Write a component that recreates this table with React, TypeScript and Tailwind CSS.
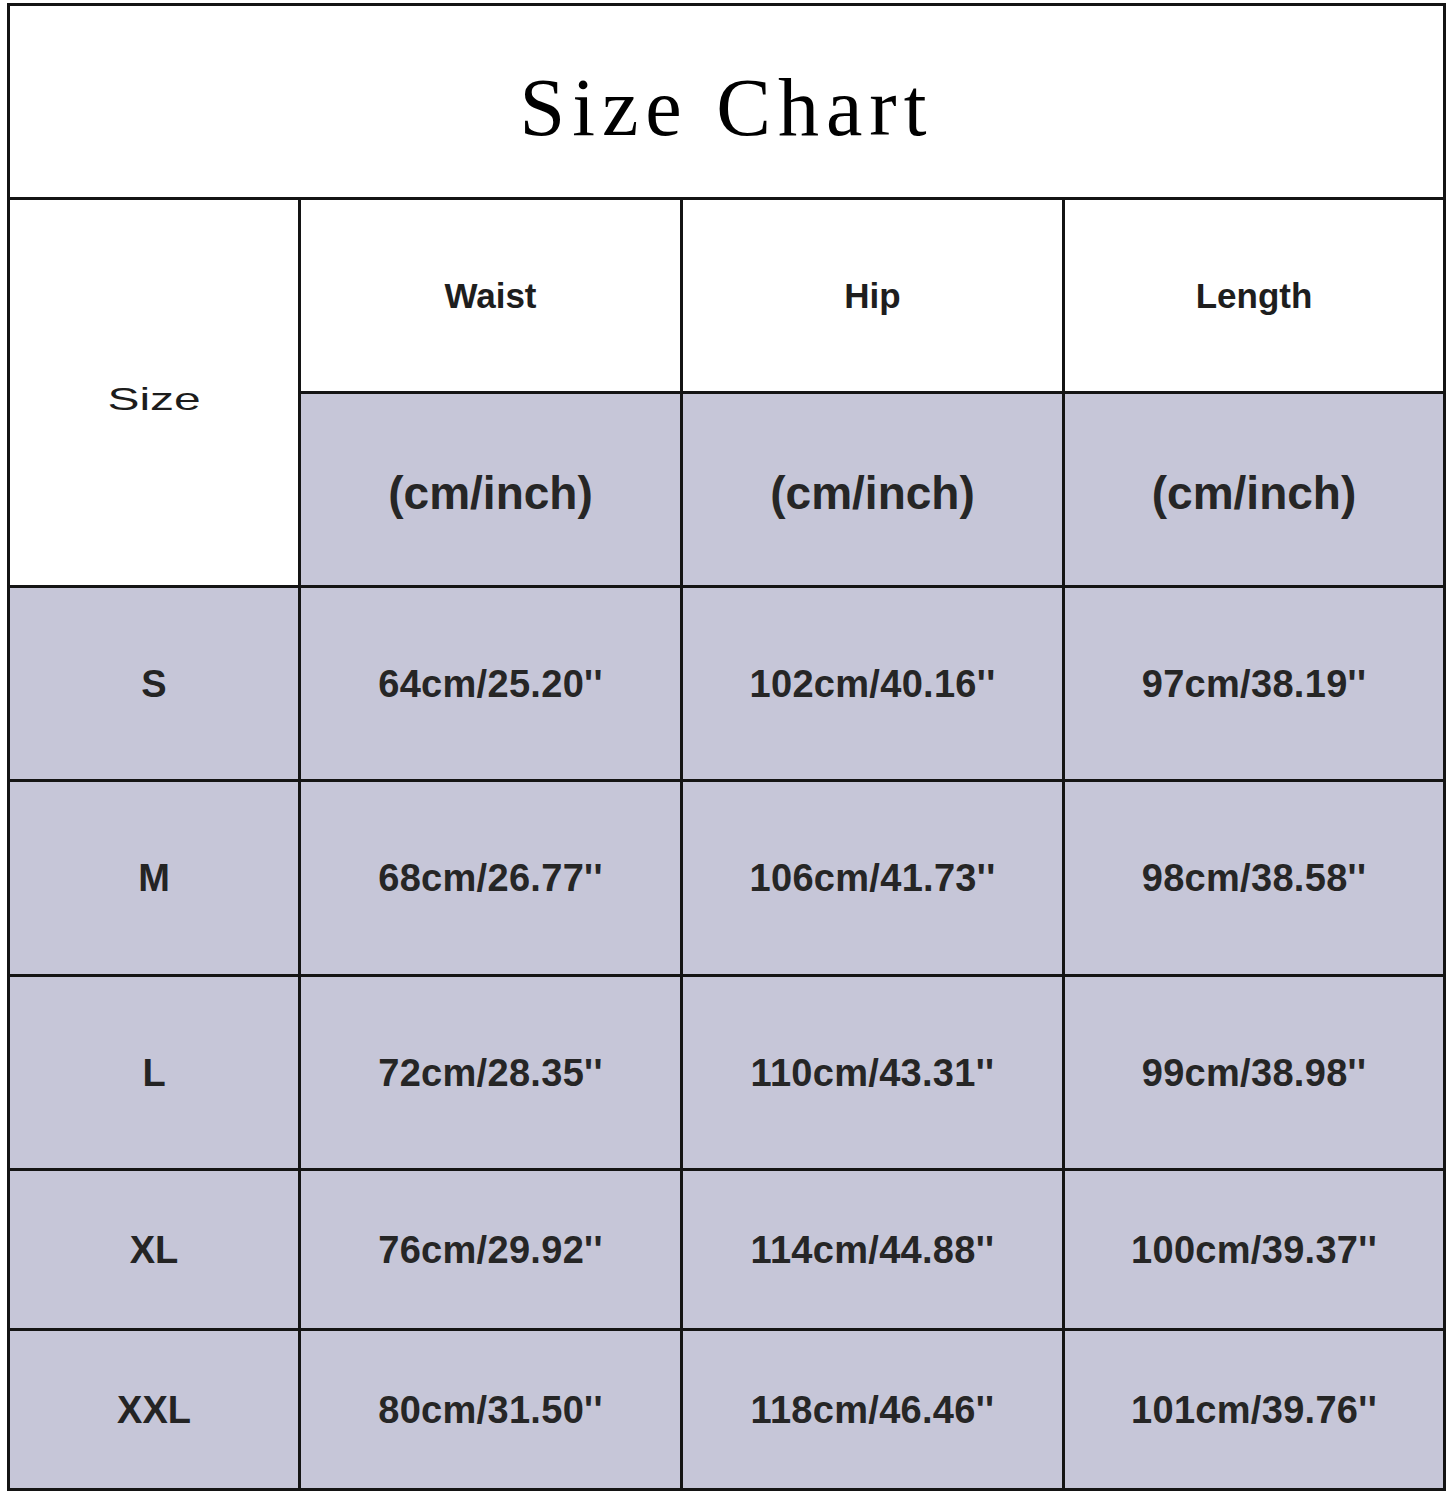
import React from "react";

const rows = [
  ["S", "64cm/25.20''", "102cm/40.16''", "97cm/38.19''", "h-[191px]"],
  ["M", "68cm/26.77''", "106cm/41.73''", "98cm/38.58''", "h-[192px]"],
  ["L", "72cm/28.35''", "110cm/43.31''", "99cm/38.98''", "h-[191px]"],
  ["XL", "76cm/29.92''", "114cm/44.88''", "100cm/39.37''", "h-[157px]"],
  ["XXL", "80cm/31.50''", "118cm/46.46''", "101cm/39.76''", "h-[157px]"],
];

const sans = { fontFamily: '"Liberation Sans", Arial, sans-serif' };

export default function App() {
  return (
    <div className="min-h-[1500px] w-[1456px] bg-white pt-[3px] pl-[7px]">
      <div
        className="grid w-[1439px] grid-cols-[288px_379px_379px_378px] gap-[3px] bg-[#141414] p-[3px]"
        style={sans}
      >
        <div className="col-span-4 flex h-[191px] items-center justify-center bg-white">
          <span
            className="pt-[12px] text-[82px] leading-none tracking-[7px] text-black"
            style={{ fontFamily: '"Liberation Serif", "Times New Roman", serif' }}
          >
            Size Chart
          </span>
        </div>

        <div className="row-span-2 flex items-center justify-center bg-white">
          <span className="inline-block pt-[12px] scale-x-[1.5] text-[32px] font-medium text-[#1c1c1c] leading-none">
            Size
          </span>
        </div>
        {["Waist", "Hip", "Length"].map((h) => (
          <div key={h} className="flex h-[191px] items-center justify-center bg-white">
            <span className="text-[35px] font-bold text-[#1e1e1e] leading-none">{h}</span>
          </div>
        ))}
        {[0, 1, 2].map((i) => (
          <div key={i} className="flex h-[191px] items-center justify-center bg-[#c6c6d8]">
            <span className="pt-[6px] text-[46px] font-bold text-[#262626] leading-none">
              (cm/inch)
            </span>
          </div>
        ))}

        {rows.map((r) => (
          <React.Fragment key={r[0]}>
            <div className={`flex ${r[4]} items-center justify-center bg-[#c6c6d8]`}>
              <span className="text-[38px] font-bold text-[#242424] leading-none">{r[0]}</span>
            </div>
            {[r[1], r[2], r[3]].map((v, j) => (
              <div key={j} className={`flex ${r[4]} items-center justify-center bg-[#c6c6d8]`}>
                <span className="text-[38px] font-bold tracking-[0.3px] text-[#262626] leading-none">
                  {v}
                </span>
              </div>
            ))}
          </React.Fragment>
        ))}
      </div>
    </div>
  );
}
